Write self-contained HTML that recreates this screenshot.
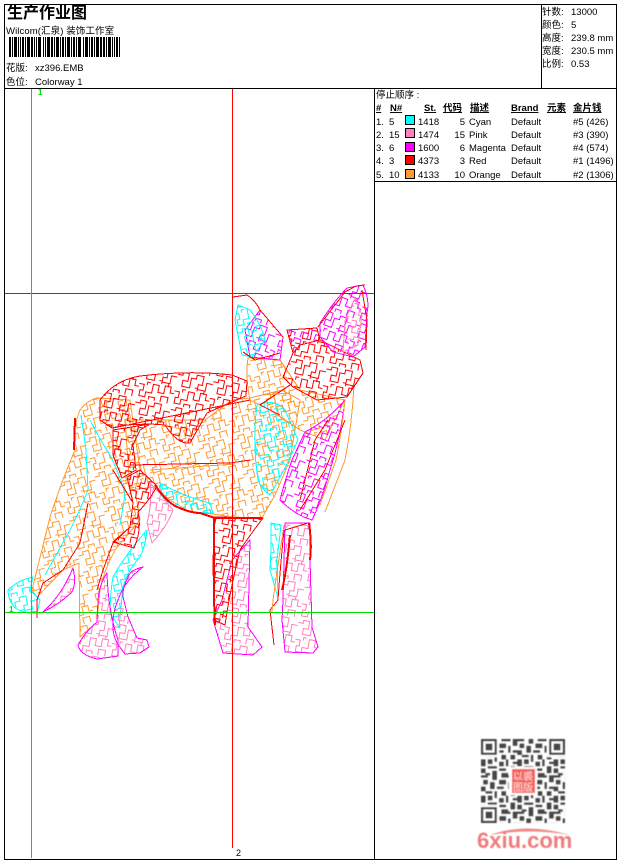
<!DOCTYPE html>
<html><head><meta charset="utf-8"><style>
html,body{margin:0;padding:0;background:#fff;width:620px;height:860px;overflow:hidden}
svg{display:block}
text{font-family:"Liberation Sans","WenQuanYi Zen Hei","Noto Sans CJK SC",sans-serif;font-size:9.5px;fill:#000}
.u{font-weight:bold;text-decoration:underline}
</style></head><body>
<svg width="620" height="860" viewBox="0 0 620 860" xmlns="http://www.w3.org/2000/svg">
<defs>
<path id="mz" fill="none" stroke-width="1" d="M0 5h5v-3h6v8h-5v6h8v-10h5v-4h7v9h-4v5h8v-8h6M0 22h5v6h-3v6h6v-5h6v-9h6v7h6v-8h6v6h4M12 36v-3h6v3M24 36v-6h7v6M19 15h3v3M8 22v-3h3M29 16v4"/>
<pattern id="pr" width="36" height="36" patternUnits="userSpaceOnUse" patternTransform="rotate(12)"><use href="#mz" stroke="#f00"/></pattern>
<pattern id="po" width="36" height="36" patternUnits="userSpaceOnUse" patternTransform="translate(7 11) rotate(-15)"><use href="#mz" stroke="#ff9933"/></pattern>
<pattern id="pm" width="36" height="36" patternUnits="userSpaceOnUse" patternTransform="translate(13 3) rotate(20)"><use href="#mz" stroke="#f0f"/></pattern>
<pattern id="pp" width="36" height="36" patternUnits="userSpaceOnUse" patternTransform="translate(3 17) rotate(10)"><use href="#mz" stroke="#ff80c0"/></pattern>
<pattern id="pc" width="36" height="36" patternUnits="userSpaceOnUse" patternTransform="translate(21 6) rotate(-12)"><use href="#mz" stroke="#0ff"/></pattern>
<pattern id="qr" width="16" height="16" patternUnits="userSpaceOnUse"><path fill="#444" d="M0 0h3v1H0zM5 0h2v2H5zM9 0h4v1H9zM14 0h2v3h-2zM1 2h2v2H1zM8 2h3v2H8zM4 3h2v3H4zM12 3h1v3h-1zM0 5h2v2H0zM7 5h3v1H7zM14 5h2v1h-2zM2 7h3v1H2zM6 7h1v3H6zM9 7h2v2H9zM13 7h2v2h-2zM0 9h2v3H0zM3 9h2v2H3zM11 9h1v3h-1zM8 10h2v2H8zM14 10h2v1h-2zM3 12h4v1H3zM13 12h2v3h-2zM0 13h2v2H0zM5 14h2v2H5zM8 13h3v1H8zM2 15h2v1H2zM9 15h3v1H9z"/></pattern>
<filter id="bl" x="-5%" y="-5%" width="110%" height="110%"><feGaussianBlur stdDeviation="0.45"/></filter>
</defs>

<!-- Fox -->
<g shape-rendering="crispEdges" stroke-linejoin="round">
<!-- far hind leg -->
<path fill="url(#pp)" stroke="#f0f" d="M43 612Q62 595 73 568Q77 585 71 593Q58 605 43 612Z"/>
<path fill="url(#pp)" stroke="#ff80c0" d="M150 483Q162 495 173 510Q168 525 152 543L147 523Q152 505 150 483Z"/>
<!-- hind legs orange -->
<path fill="url(#po)" stroke="#ff9933" d="M80 410Q88 400 97 398L130 400L140 470L135 490L140 520L115 550Q104 570 100 590L97 622L80 637L79 563L63 570L37 597L32 590Q42 550 50 517Q62 480 75 450Q72 430 80 410Z"/>
<!-- cyan paw and strips -->
<path fill="url(#pc)" stroke="#0ff" d="M8 590Q18 580 33 577L30 590L40 600L37 613Q25 614 15 608Q8 600 8 590Z"/>
<path fill="url(#pc)" stroke="#0ff" d="M113 577Q125 555 147 530Q146 545 140 557Q128 570 123 587L119 627L110 613Q110 595 113 577Z"/>
<path fill="none" stroke="#0ff" d="M81 415Q84 435 86 450L88 490Q78 515 70 530L45 575M90 420Q100 440 110 455Q122 480 125 495L120 525"/>
<!-- hind feet -->
<path fill="url(#pp)" stroke="#f0f" d="M107 573Q99 585 98 600L97 622Q85 632 78 645Q80 655 97 659L118 656L118 640Q108 610 107 573Z"/>
<path fill="url(#pp)" stroke="#f0f" d="M143 567Q130 570 128 577Q122 590 123 597L128 617L137 638L147 640L149 647L140 653L125 654L117 643Q108 625 118 600Q125 580 143 567Z"/>
<!-- belly orange -->
<path fill="url(#po)" stroke="#ff9933" d="M125 420L170 420L205 420L232 400L250 398L282 390L300 400L290 460L275 495L262 518L232 517L213 514L190 512L170 500L155 487L130 490Z"/>
<!-- cyan belly -->
<path fill="url(#pc)" stroke="#0ff" d="M160 483Q185 497 210 503L213 513L193 512Q175 508 163 498Z"/>
<path fill="url(#pc)" stroke="#0ff" d="M257 405Q275 398 285 410L298 440Q285 470 270 495Q262 490 258 480Q252 440 257 405Z"/>
<!-- neck orange -->
<path fill="url(#po)" stroke="#ff9933" d="M248 358L280 360L300 390L345 400L325 440L300 430L270 410L250 400Q245 378 248 358Z"/>
<!-- red saddle -->
<path fill="url(#pr)" stroke="#f00" d="M100 400Q115 380 140 376Q190 370 232 375L247 381L246 396L232 402L207 413L190 443Q178 445 165 425L150 424L125 425L112 428L100 420Z"/>
<path fill="url(#pr)" stroke="#f00" d="M113 430L150 424L140 430L133 445L136 470L122 478L113 455Z"/>
<path fill="url(#pr)" stroke="#f00" d="M127 477L140 470L157 486Q150 500 138 512Q142 530 134 548L113 542L130 527L133 503Z"/>
<!-- chest magenta -->
<path fill="url(#pm)" stroke="#f0f" d="M305 432Q328 420 345 400Q340 440 330 470Q322 500 312 520Q295 515 280 500Q285 480 292 460Z"/>
<path fill="none" stroke="#ff9933" d="M345 400Q342 430 336 460L320 505M354 385Q352 425 345 460L325 512"/>
<!-- front legs -->
<path fill="url(#pp)" stroke="#f0f" d="M232 560L250 540L248 627L262 647L253 655L223 653L213 620L222 600Z"/>
<path fill="url(#pr)" stroke="#f00" d="M215 517L263 518Q250 535 240 550Q230 590 225 625L214 620L213 560Z"/>
<path fill="url(#pp)" stroke="#f0f" d="M285 523L310 523L310 560L312 627L318 647L313 653L285 652L282 620L283 600Z"/>
<path fill="url(#pc)" stroke="#0ff" d="M271 523L281 525L277 560L278 598L270 570L271 550Z"/>
<path fill="none" stroke="#f00" stroke-width="2" d="M214 517V600L215 625M309 523Q312 545 310 560M290 535Q287 570 282 590"/>
<path fill="none" stroke="#f00" d="M284 530Q280 570 278 600L270 610L274 645M308 523L285 530"/>
<path fill="none" stroke="#ff9933" d="M284 525L278 565L273 600L272 612"/>
<!-- left ear -->
<path fill="url(#pm)" stroke="#f0f" d="M260 310L283 337L280 360L250 357L245 330Z"/>
<path fill="url(#pc)" stroke="#0ff" d="M238 305L250 310Q262 325 265 340L252 357L242 355L235 320Z"/>
<path fill="none" stroke="#f00" d="M233 297L247 295Q255 300 260 310L283 337M243 352L255 360L280 353"/>
<!-- head -->
<path fill="url(#pr)" stroke="#f00" d="M287 330L317 328L320 340L360 360L363 373L347 397L337 398L317 400L293 387L283 377L293 353Z"/>
<path fill="url(#pm)" stroke="#f00" d="M287 330L317 328L320 340L300 345L293 353Z"/>
<!-- right ear -->
<path fill="url(#pm)" stroke="#f0f" d="M320 323Q335 300 347 288L363 285Q370 300 367 313L365 347L353 357L333 352L320 337Z"/>
<path fill="url(#pp)" stroke="#ff80c0" d="M355 298L362 315L358 345L343 352L345 320Z"/>
<path fill="none" stroke="#f00" d="M318 327Q335 305 345 292L356 286L365 285M362 290L367 320L366 350"/>
<!-- accent lines -->
<path fill="none" stroke="#f00" stroke-width="2" d="M155 485Q165 500 175 506Q190 513 200 513L215 518H262M75 418L74 450"/>
<path fill="none" stroke="#f00" d="M113 428L250 400M130 465L230 463L250 460M280 415L260 405L290 385M328 420L315 440L300 500M345 420L325 470L300 510M88 503L80 543L63 570L43 583L37 600V618M113 470L133 503L130 527L113 543L103 570L97 590"/>
<path fill="none" stroke="#ff9933" d="M262 395L290 393M150 470L235 464"/>
</g>

<!-- Guides -->
<g shape-rendering="crispEdges">
<path stroke="#ff0000" d="M232.5 88V848M5 293.5H374"/>
<path stroke="#00e000" d="M31.5 88V858M5 612.5H374"/>
<!-- Frame -->
<path fill="none" stroke="#000" d="M4.5 4.5H616.5V859.5H4.5ZM4.5 88.5H616.5M541.5 4.5V88.5M374.5 88.5V859.5M374.5 181.5H616.5"/>
<!-- Barcode -->
<line x1="9" x2="120" y1="47" y2="47" stroke="#000" stroke-width="20" stroke-dasharray="2 1 1 1 3 1 1 1 1 1 2 1 1 1 3 1 2 1 1 1 1 1 3 2 1 1 1 1 3 1 2 1 1 1 3 1 1 1 2 1 1 1 3 1 1 1 2 1 1 1 3 2 1 1 3 1 1 1 2 1 1 1 3 1 2 1"/>
<!-- Swatches -->
<g stroke="#000">
<rect x="405.5" y="115.5" width="9" height="9" fill="#00ffff"/>
<rect x="405.5" y="128.5" width="9" height="9" fill="#ff80c0"/>
<rect x="405.5" y="142.5" width="9" height="9" fill="#ff00ff"/>
<rect x="405.5" y="155.5" width="9" height="9" fill="#ff0000"/>
<rect x="405.5" y="169.5" width="9" height="9" fill="#ff9933"/>
</g>
</g>

<text x="38" y="95" style="font-size:8px;fill:#00e000;font-weight:bold">1</text>
<text x="9" y="612" style="font-size:8px;fill:#00e000;font-weight:bold">1</text>
<text x="236" y="856" style="font-size:9px">2</text>

<!-- Header -->
<text x="7" y="18" style="font-size:16px;font-weight:bold">生产作业图</text>
<text x="6" y="34" style="font-size:9.5px;letter-spacing:.1px">Wilcom(汇泉) 装饰工作室</text>
<text x="6" y="71">花版:</text><text x="35" y="71">xz396.EMB</text>
<text x="6" y="85">色位:</text><text x="35" y="85">Colorway 1</text>

<text x="542" y="15">针数:</text><text x="571" y="15">13000</text>
<text x="542" y="28">颜色:</text><text x="571" y="28">5</text>
<text x="542" y="41">高度:</text><text x="571" y="41">239.8 mm</text>
<text x="542" y="54">宽度:</text><text x="571" y="54">230.5 mm</text>
<text x="542" y="67">比例:</text><text x="571" y="67">0.53</text>

<!-- Table -->
<text x="376" y="98">停止顺序 :</text>
<text x="376" y="111" class="u">#</text><text x="390" y="111" class="u">N#</text>
<text x="424" y="111" class="u">St.</text><text x="443" y="111" class="u">代码</text>
<text x="470" y="111" class="u">描述</text><text x="511" y="111" class="u">Brand</text>
<text x="547" y="111" class="u">元素</text><text x="573" y="111" class="u">金片钱</text>

<text x="376" y="125">1.</text><text x="389" y="125">5</text><text x="418" y="125">1418</text><text x="465" y="125" text-anchor="end">5</text><text x="469" y="125">Cyan</text><text x="511" y="125">Default</text><text x="573" y="125">#5 (426)</text>
<text x="376" y="138">2.</text><text x="389" y="138">15</text><text x="418" y="138">1474</text><text x="465" y="138" text-anchor="end">15</text><text x="469" y="138">Pink</text><text x="511" y="138">Default</text><text x="573" y="138">#3 (390)</text>
<text x="376" y="151">3.</text><text x="389" y="151">6</text><text x="418" y="151">1600</text><text x="465" y="151" text-anchor="end">6</text><text x="469" y="151">Magenta</text><text x="511" y="151">Default</text><text x="573" y="151">#4 (574)</text>
<text x="376" y="164">4.</text><text x="389" y="164">3</text><text x="418" y="164">4373</text><text x="465" y="164" text-anchor="end">3</text><text x="469" y="164">Red</text><text x="511" y="164">Default</text><text x="573" y="164">#1 (1496)</text>
<text x="376" y="178">5.</text><text x="389" y="178">10</text><text x="418" y="178">4133</text><text x="465" y="178" text-anchor="end">10</text><text x="469" y="178">Orange</text><text x="511" y="178">Default</text><text x="573" y="178">#2 (1306)</text>

<!-- QR -->
<g filter="url(#bl)">
<g transform="translate(481 739) scale(2.27)">
<rect width="37" height="37" fill="url(#qr)"/>
<g fill="#fff"><rect width="8" height="8"/><rect x="29" width="8" height="8"/><rect y="29" width="8" height="8"/></g>
<g fill="none" stroke="#444"><rect x=".5" y=".5" width="6" height="6"/><rect x="30.5" y=".5" width="6" height="6"/><rect x=".5" y="30.5" width="6" height="6"/></g>
<g fill="#444"><rect x="2" y="2" width="3" height="3"/><rect x="32" y="2" width="3" height="3"/><rect x="2" y="32" width="3" height="3"/></g>
</g>
<rect x="509" y="767" width="28" height="28" fill="#fff"/>
<rect x="512" y="769" width="23" height="24" fill="#f4605c"/>
<text x="513" y="780" style="font-size:10px;fill:#ffe0e0">以裘</text>
<text x="513" y="791" style="font-size:10px;fill:#ffe0e0">图版</text>
</g>

<!-- Logo -->
<g filter="url(#bl)">
<path d="M490 835Q525 822 570 835Q530 828 490 835Z" fill="#f08a8a"/>
<text x="477" y="848" style="font-size:22px;font-weight:bold;fill:#f07c7c;font-family:'Liberation Sans',sans-serif">6xiu.com</text>
</g>
</svg>
</body></html>
